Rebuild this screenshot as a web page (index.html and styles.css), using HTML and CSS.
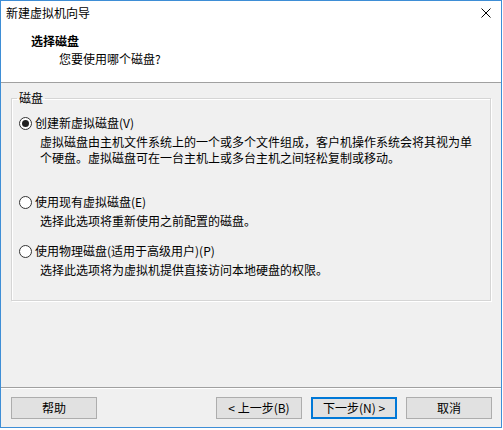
FILE: index.html
```html
<!DOCTYPE html>
<html lang="zh-CN">
<head>
<meta charset="utf-8">
<title>新建虚拟机向导</title>
<link rel="stylesheet" href="styles.css">
</head>
<body>
<div class="window">
  <div class="titlebar">
    <span class="title">新建虚拟机向导</span>
    <svg class="close" width="10" height="10" viewBox="0 0 10 10"><path d="M0.5 0.5 L9.5 9.5 M9.5 0.5 L0.5 9.5" stroke="#000" stroke-width="1" fill="none"/></svg>
  </div>
  <div class="header">
    <div class="h-title">选择磁盘</div>
    <div class="h-sub">您要使用哪个磁盘?</div>
  </div>
  <div class="body">
    <fieldset class="group">
      <legend class="legend">磁盘</legend>
      <div class="opt opt1">
        <div class="opt-label"><span class="radio checked"></span><span>创建新虚拟磁盘(V)</span></div>
        <div class="desc">虚拟磁盘由主机文件系统上的一个或多个文件组成，客户机操作系统会将其视为单<br>个硬盘。虚拟磁盘可在一台主机上或多台主机之间轻松复制或移动。</div>
      </div>
      <div class="opt opt2">
        <div class="opt-label"><span class="radio"></span><span>使用现有虚拟磁盘(E)</span></div>
        <div class="desc">选择此选项将重新使用之前配置的磁盘。</div>
      </div>
      <div class="opt opt3">
        <div class="opt-label"><span class="radio"></span><span>使用物理磁盘(适用于高级用户)(P)</span></div>
        <div class="desc">选择此选项将为虚拟机提供直接访问本地硬盘的权限。</div>
      </div>
    </fieldset>
  </div>
  <div class="footer">
    <button class="btn">帮助</button>
    <div class="btn-group">
      <button class="btn">&lt; 上一步(B)</button>
      <button class="btn default">下一步(N) &gt;</button>
      <button class="btn">取消</button>
    </div>
  </div>
</div>
</body>
</html>
```

FILE: styles.css
```css
* { box-sizing: border-box; }
html, body { margin: 0; padding: 0; background: #ffffff; }
body {
  font-family: "Noto Sans CJK SC", "DejaVu Sans", sans-serif;
  font-size: 12px;
  color: #000;
}
.window {
  width: 502px;
  height: 428px;
  border: 1px solid #3e8ed6;
  display: flex;
  flex-direction: column;
  background: #fff;
}
.titlebar {
  height: 29px;
  flex: none;
  display: flex;
  align-items: flex-start;
  padding: 4px 10px 0 5px;
  line-height: 16px;
  background: #fff;
}
.title { white-space: nowrap; }
.close { margin-left: auto; margin-top: 3px; display: block; }
.header {
  height: 53px;
  flex: none;
  background: #fff;
  border-bottom: 1px solid #a0a0a0;
  padding: 3px 0 0 30px;
  line-height: 16px;
}
.h-title { font-weight: bold; }
.h-sub { margin-top: 2px; margin-left: 28px; }
.body {
  flex: 1;
  background: #f0f0f0;
  padding: 8px 10px 0 10px;
}
.group {
  margin: 0;
  padding: 0 0 22px 0;
  border: 1px solid #d5d5d5;
  box-shadow: inset 1px 1px 0 #ffffff, 1px 1px 0 #ffffff;
  min-width: 0;
}
.legend {
  margin-left: 5px;
  padding: 0 2px;
  line-height: 14px;
}
.opt { padding-left: 7px; }
.opt1 { margin-top: 10px; }
.opt2 { margin-top: 28px; }
.opt3 { margin-top: 14px; }
.opt-label {
  display: flex;
  align-items: center;
  height: 16px;
  line-height: 16px;
  white-space: nowrap;
}
.radio {
  width: 13px;
  height: 13px;
  border: 1px solid #333;
  border-radius: 50%;
  background: #fff;
  margin-right: 3px;
  display: flex;
  align-items: center;
  justify-content: center;
  flex: none;
}
.radio.checked::after {
  content: "";
  width: 7px;
  height: 7px;
  border-radius: 50%;
  background: #222;
}
.desc {
  margin-top: 3px;
  margin-left: 21px;
  line-height: 16px;
  white-space: nowrap;
}
.footer {
  height: 40px;
  flex: none;
  background: #f0f0f0;
  border-top: 1px solid #a0a0a0;
  box-shadow: inset 0 1px 0 #ffffff;
  display: flex;
  align-items: flex-start;
  padding: 9px 9px 0 10px;
}
.btn-group {
  margin-left: auto;
  display: flex;
  gap: 9px;
}
.btn {
  width: 86px;
  height: 22px;
  margin: 0;
  padding: 0;
  font-family: inherit;
  font-size: 12px;
  line-height: 16px;
  color: #000;
  background: #e1e1e1;
  border: 1px solid #adadad;
  border-radius: 0;
}
.btn.default {
  border: 1px solid #0078d7;
  box-shadow: inset 0 0 0 1px #0078d7;
}
```
